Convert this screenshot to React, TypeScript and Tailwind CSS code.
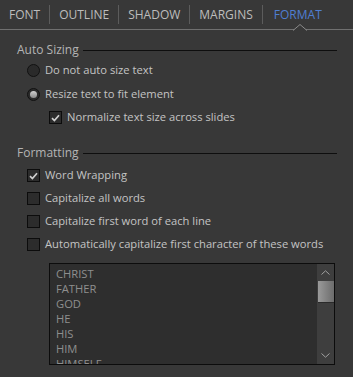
import React from "react";

const tabs = ["FONT", "OUTLINE", "SHADOW", "MARGINS", "FORMAT"];
const words = ["CHRIST", "FATHER", "GOD", "HE", "HIS", "HIM", "HIMSELF"];

function Radio({ checked }: { checked?: boolean }) {
  return (
    <span className="w-[13px] h-[13px] rounded-full border border-[#111111] bg-[#2a2a2a] flex items-center justify-center shrink-0">
      {checked && <span className="w-[7px] h-[7px] rounded-full bg-gradient-to-b from-[#d0d0d0] to-[#8a8a8a]" />}
    </span>
  );
}

function Check({ checked }: { checked?: boolean }) {
  return (
    <span className="w-[13px] h-[13px] border border-[#0c0c0c] bg-[#2c2c2c] flex items-center justify-center shrink-0">
      {checked && (
        <svg width="9" height="8" viewBox="0 0 9 8">
          <path d="M1 4.2 L3.4 6.6 L8 1.2" fill="none" stroke="#cfcfcf" strokeWidth="1.7" />
        </svg>
      )}
    </span>
  );
}

function Header({ label }: { label: string }) {
  return (
    <div className="h-[16px] flex items-center pl-[17px] pr-[16px] gap-[4px] text-[12px]">
      <span className="text-[#b4b4b4]">{label}</span>
      <span className="flex-1 h-px bg-[#0e0e0e]" />
    </div>
  );
}

function Row({ children, label, indent, h }: { children: React.ReactNode; label: string; indent: string; h: string }) {
  return (
    <div className={`flex items-center gap-[5px] ${indent} ${h}`}>
      {children}
      <span>{label}</span>
    </div>
  );
}

export default function App() {
  return (
    <div
      className="w-[353px] h-[377px] bg-[#383838] text-[#c4c4c4] text-[11.2px] overflow-hidden"
      style={{ fontFamily: '"Open Sans", "Noto Sans", sans-serif' }}
    >
      <div className="relative h-[30px] border-b border-[#707070] flex items-center text-[12px]">
        {tabs.map((t, i) => (
          <div
            key={t}
            className={`px-[9px] h-[19px] flex items-center ${i < tabs.length - 1 ? "border-r border-[#5c5c5c]" : ""} ${
              t === "FORMAT" ? "text-[#4f7ed2] pl-[11px]" : "text-[#bdbdbd]"
            }`}
          >
            {t}
          </div>
        ))}
        <svg className="absolute left-[293px] top-[24px]" width="14" height="7" viewBox="0 0 14 7">
          <path d="M0 6.5 L7 0.5 L14 6.5" fill="#383838" stroke="#8a8a8a" strokeWidth="1" />
        </svg>
      </div>

      <div className="pt-[12px]">
        <Header label="Auto Sizing" />
        <Row label="Do not auto size text" indent="pl-[27px]" h="h-[24px]">
          <Radio />
        </Row>
        <Row label="Resize text to fit element" indent="pl-[27px]" h="h-[24px]">
          <Radio checked />
        </Row>
        <Row label="Normalize text size across slides" indent="pl-[49px]" h="h-[23px]">
          <Check checked />
        </Row>
      </div>

      <div className="mt-[16px]">
        <Header label="Formatting" />
        <div className="mt-[3px]">
          <Row label="Word Wrapping" indent="pl-[27px]" h="h-[23px]">
            <Check checked />
          </Row>
          <Row label="Capitalize all words" indent="pl-[27px]" h="h-[23px]">
            <Check />
          </Row>
          <Row label="Capitalize first word of each line" indent="pl-[27px]" h="h-[23px]">
            <Check />
          </Row>
          <Row label="Automatically capitalize first character of these words" indent="pl-[27px]" h="h-[23px]">
            <Check />
          </Row>
        </div>
      </div>

      <div className="ml-[49px] mt-[7px] w-[286px] h-[102px] border border-[#0c0c0c] bg-[#2e2e2e] flex">
        <div className="flex-1 overflow-hidden pl-[6px] pt-[2px] text-[#8e8e8e] leading-[15px]">
          {words.map((w) => (
            <div key={w}>{w}</div>
          ))}
        </div>
        <div className="w-[17px] bg-[#3e3e3e] flex flex-col items-center">
          <div className="h-[17px] flex items-center justify-center">
            <svg width="9" height="5" viewBox="0 0 9 5">
              <path d="M0.5 4.5 L4.5 0.8 L8.5 4.5" fill="none" stroke="#a0a0a0" strokeWidth="1" />
            </svg>
          </div>
          <div className="w-[16px] h-[22px] bg-gradient-to-r from-[#9a9a9a] to-[#6c6c6c] border-b border-[#2a2a2a]" />
          <div className="flex-1" />
          <div className="h-[17px] flex items-center justify-center">
            <svg width="9" height="5" viewBox="0 0 9 5">
              <path d="M0.5 0.5 L4.5 4.2 L8.5 0.5" fill="none" stroke="#a0a0a0" strokeWidth="1" />
            </svg>
          </div>
        </div>
      </div>
    </div>
  );
}
